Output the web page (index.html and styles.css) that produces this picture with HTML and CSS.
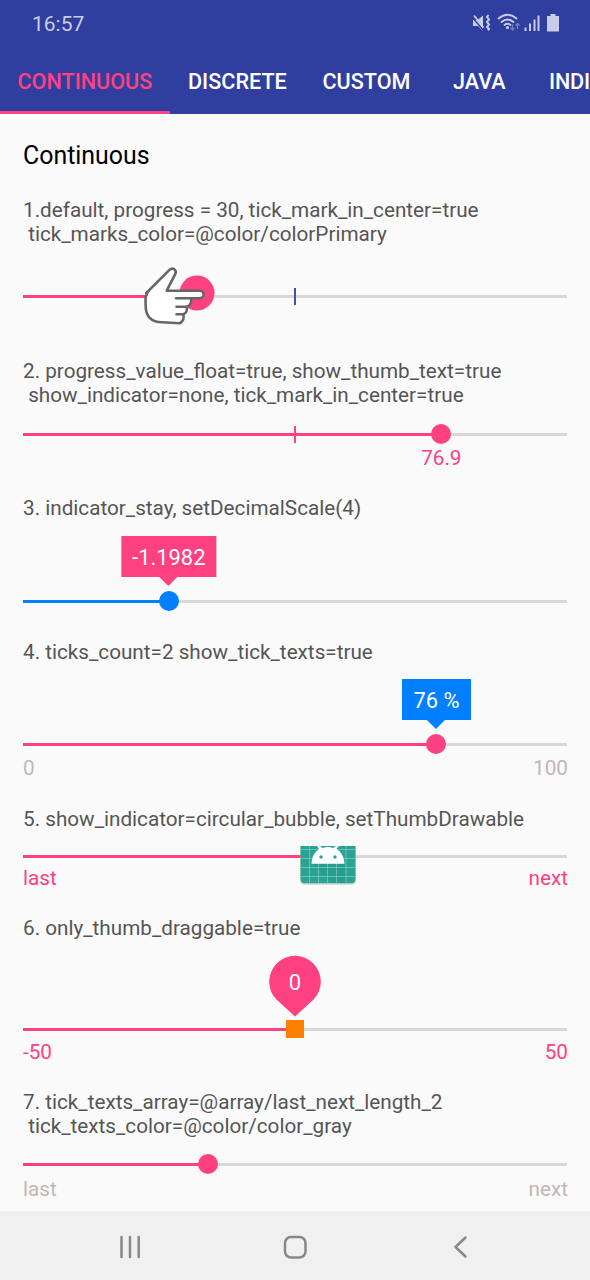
FILE: index.html
```html
<!DOCTYPE html>
<html lang="en">
<head>
<meta charset="utf-8">
<title>Continuous</title>
<link rel="stylesheet" href="styles.css">
</head>
<body>
<header class="app-bar">
  <div class="status">
    <span class="clock">16:57</span>
    <svg class="status-icons" width="90" height="22" viewBox="0 0 90 22" fill="#c9cdea">
      <path d="M3 8h4.500L13 3.500V19l-5-5H3z"/>
      <path d="M2.500 5.500l11 13" stroke="#303f9f" stroke-width="1.400"/>
      <path d="M4 3.500l9.500 12" stroke="#c9cdea" stroke-width="1.800"/>
      <path d="M18.500 3l-1.500 2 2 2.500-2 2.500 2 2.500-2 2.500 2 2-1 1.500" fill="none" stroke="#c9cdea" stroke-width="2"/>
      <g fill="none" stroke="#c9cdea" stroke-width="1.800" stroke-linecap="round">
        <path d="M28.500 6.500q9-7.500 18 0"/><path d="M31.500 10q6-5 12 0"/><path d="M34.500 13q3-2.500 6 0"/>
      </g>
      <circle cx="37.500" cy="15.500" r="1.600"/>
      <g fill="none" stroke="#777fc0" stroke-width="1.300"><path d="M42.500 12.500v5.500m-2-2l2 2 2-2M47.500 17v-5.500m-2 2l2-2 2 2"/></g>
      <path d="M54.500 15.500h2V19h-2zM59 11.500h2V19h-2zM63.500 7.500h2V19h-2zM67.500 3.500h2V19h-2z"/>
      <path d="M80.500 2h5v2H89v15.500H77V4h3.500z"/>
    </svg>
  </div>
  <nav class="tabs">
    <span class="tab tab-continuous">CONTINUOUS</span>
    <span class="tab tab-discrete">DISCRETE</span>
    <span class="tab tab-custom">CUSTOM</span>
    <span class="tab tab-java">JAVA</span>
    <span class="tab tab-last">INDI</span>
  </nav>
</header>
<main class="content">
  <h1 class="title">Continuous</h1>

  <section class="demo demo-1">
    <p class="label">1.default, progress = 30, tick_mark_in_center=true<br>&nbsp;tick_marks_color=@color/colorPrimary</p>
    <div class="track">
      <div class="fill" style="width:30%"></div>
      <i class="mark mark-indigo"></i>
      <i class="thumb thumb-pressed" style="left:174px"></i>
      <svg class="hand" width="64" height="62" viewBox="0 0 64 62">
        <path d="M4 28L27.500 4.500Q29.500 2.500 32 4Q34.500 6 33 9L24.500 25.500H57C63 25.500 63 33 57 33H48.500C50 36.500 48 41 44.500 41.500C45.500 45 44 48.500 41 49C42.500 52 41 56.500 37.500 58L20 57C8 57 3.500 50 3.500 41C3.500 35 2 31 7 25Z" transform="translate(.2 -.8)" fill="#fff" stroke="#666" stroke-width="2.600" stroke-linejoin="round"/>
        <path d="M34 32.200H49M34.500 40.700H45M34.500 48.200H41" fill="none" stroke="#666" stroke-width="2.600" stroke-linecap="round"/>
      </svg>
    </div>
  </section>

  <section class="demo demo-2">
    <p class="label">2. progress_value_float=true, show_thumb_text=true<br>&nbsp;show_indicator=none, tick_mark_in_center=true</p>
    <div class="track">
      <div class="fill" style="width:76.900%"></div>
      <i class="mark"></i>
      <i class="thumb" style="left:76.900%"></i>
      <span class="thumb-text" style="left:76.900%">76.9</span>
    </div>
  </section>

  <section class="demo demo-3">
    <p class="label">3. indicator_stay, setDecimalScale(4)</p>
    <div class="track">
      <div class="fill fill-blue" style="width:26.700%"></div>
      <i class="thumb thumb-blue" style="left:26.800%"></i>
      <span class="bubble" style="left:26.800%">-1.1982</span>
    </div>
  </section>

  <section class="demo demo-4">
    <p class="label">4. ticks_count=2 show_tick_texts=true</p>
    <div class="track">
      <div class="fill" style="width:76%"></div>
      <i class="thumb" style="left:76%"></i>
      <span class="bubble bubble-blue" style="left:76%">76 %</span>
    </div>
    <div class="ends ends-gray"><span>0</span><span>100</span></div>
  </section>

  <section class="demo demo-5">
    <p class="label">5. show_indicator=circular_bubble, setThumbDrawable</p>
    <div class="track">
      <div class="fill" style="width:56%"></div>
      <svg class="robot" width="56" height="40" viewBox="0 0 56 40">
        <path d="M.5 1h55v34.500q0 4-4 4h-47q-4 0-4-4z" fill="#b5c5c2"/>
        <path d="M.5 1h55v33q0 4-4 4h-47q-4 0-4-4z" fill="#2aa394"/>
        <path d="M12 18h32l2 20H32z" fill="#209384" opacity=".35"/>
        <path d="M9.500 1v37M18.500 1v37M27.500 1v37M36.500 1v37M46 1v37M.5 4.500h55M.5 13.500h55M.5 22.500h55M.5 31.500h55" stroke="#7fd0c5" stroke-width=".7"/>
        <path d="M11.500 18.700C12 11 15 6.500 19.500 4L17 1h3.200l2.200 2Q28 .8 33.500 3L35.700 1H39l-2.700 3C41 6.500 44 11 44.500 18.700Z" fill="#fff"/>
        <circle cx="21" cy="12" r="1.700" fill="#26a69a"/><circle cx="35" cy="12" r="1.700" fill="#26a69a"/>
      </svg>
    </div>
    <div class="ends"><span>last</span><span>next</span></div>
  </section>

  <section class="demo demo-6">
    <p class="label">6. only_thumb_draggable=true</p>
    <div class="track">
      <div class="fill" style="width:50%"></div>
      <i class="thumb thumb-square" style="left:50%"></i>
      <svg class="pin" width="52" height="62" viewBox="0 0 52 62"><path d="M26 61.500L7.200 44.300A25.800 25.800 0 1 1 44.800 44.300Z" fill="#ff4081"/></svg>
      <span class="pin-text">0</span>
    </div>
    <div class="ends"><span>-50</span><span>50</span></div>
  </section>

  <section class="demo demo-7">
    <p class="label">7. tick_texts_array=@array/last_next_length_2<br>&nbsp;tick_texts_color=@color/color_gray</p>
    <div class="track">
      <div class="fill" style="width:34%"></div>
      <i class="thumb" style="left:34%"></i>
    </div>
    <div class="ends ends-gray"><span>last</span><span>next</span></div>
  </section>
</main>
<footer class="nav-bar">
  <svg width="24" height="24" viewBox="0 0 24 24"><path d="M3.500 2v20M12 2v20M20.700 2v20"/></svg>
  <svg width="24" height="24" viewBox="0 0 24 24"><rect x="2" y="2" width="20.500" height="20.500" rx="6"/></svg>
  <svg width="24" height="24" viewBox="0 0 24 24"><path d="M17.500 2.500L7.500 12l10 9.500"/></svg>
</footer>
</body>
</html>
```
FILE: styles.css
```css
* { box-sizing: border-box; }
body {
  margin: 0;
  width: 590px;
  height: 1280px;
  display: flex;
  flex-direction: column;
  overflow: hidden;
  background: #fafafa;
  font-family: Roboto, sans-serif;
  font-size: 20.700px;
  line-height: 24px;
  color: #555;
}
.app-bar { height: 114px; flex: none; background: #303f9f; }
.status {
  height: 48px;
  display: flex;
  justify-content: space-between;
  padding: 12px 30px 0 32px;
}
.clock { font-size: 21px; color: #c9cdea; }
.tabs { height: 66px; display: flex; }
.tab {
  flex: none;
  height: 66px;
  padding: 22px 0 0 18px;
  font-size: 21.600px;
  font-weight: 500;
  color: #fff;
  white-space: nowrap;
}
.tab-continuous {
  width: 170px;
  padding-left: 17.500px;
  color: #ff4081;
  border-bottom: 3px solid #ff4081;
}
.tab-discrete { width: 134.500px; }
.tab-custom { width: 130.500px; }
.tab-java { width: 96px; }
.tab-last { width: 59px; letter-spacing: -.2px; }
.content { height: 1097px; flex: none; padding: 0 23px; }
.title {
  margin: 0;
  padding-top: 27px;
  height: 84px;
  font-size: 24.900px;
  line-height: 30px;
  font-weight: 400;
  color: #000;
}
.demo { display: flex; flex-direction: column; }
.label { margin: 0; white-space: nowrap; }
.demo-1 { height: 161px; }
.demo-2 { height: 137px; }
.demo-3 { height: 143.500px; }
.demo-4 { height: 167.500px; }
.demo-5 { height: 109px; }
.demo-6 { height: 174px; }
.demo-1 .track { margin-top: 49px; }
.demo-2 .track { margin-top: 26px; }
.demo-3 .track { margin-top: 80px; }
.demo-4 .track { margin-top: 79.500px; }
.demo-5 .track { margin-top: 24px; }
.demo-6 .track { margin-top: 88px; }
.demo-7 .track { margin-top: 25px; }
.track {
  position: relative;
  flex: none;
  width: 544px;
  height: 3px;
  background: #d8d8d8;
}
.fill { height: 3px; background: #ff4081; }
.fill-blue { background: #007fff; }
.mark {
  position: absolute;
  left: 271px;
  top: -7px;
  width: 2px;
  height: 17px;
  background: #ff4081;
}
.mark-indigo { background: #3f51b5; }
.thumb {
  position: absolute;
  top: 1px;
  width: 20px;
  height: 20px;
  border-radius: 50%;
  background: #ff4081;
  transform: translate(-50%, -50%);
}
.thumb-pressed { top: -2.500px; width: 35px; height: 35px; }
.thumb-blue { background: #007fff; }
.thumb-square { width: 18px; height: 18px; border-radius: 0; background: #ff8000; }
.thumb-text {
  position: absolute;
  top: 13px;
  color: #ff4081;
  transform: translateX(-50%);
}
.hand { position: absolute; left: 118.500px; top: -29px; }
.bubble {
  position: absolute;
  top: -64px;
  height: 41px;
  padding: 0 11px;
  line-height: 44px;
  font-size: 21.900px;
  color: #fff;
  background: #ff4081;
  white-space: nowrap;
  transform: translateX(-50%);
}
.bubble::after {
  content: "";
  position: absolute;
  left: 50%;
  top: 100%;
  margin-left: -9px;
  border: 9px solid transparent;
  border-top-color: #ff4081;
  border-bottom: 0;
}
.bubble-blue { background: #007fff; }
.bubble-blue::after { border-top-color: #007fff; }
.robot { position: absolute; left: 277px; top: -10px; }
.pin { position: absolute; left: 246px; top: -73px; }
.pin-text {
  position: absolute;
  left: 246px;
  top: -57px;
  width: 52px;
  text-align: center;
  color: #fff;
  font-size: 22px;
}
.ends {
  display: flex;
  justify-content: space-between;
  margin-top: 10px;
  margin-right: -1px;
  color: #ff4081;
}
.demo-5 .ends { margin-top: 8px; }
.demo-6 .ends { margin-top: 9px; }
.demo-7 .ends { margin-top: 11px; }
.ends-gray { color: #c5b5b5; }
.nav-bar {
  height: 72px;
  flex: none;
  display: flex;
  justify-content: space-between;
  align-items: center;
  padding: 0 118px;
  background: #f0f0f0;
}
.nav-bar svg { fill: none; stroke: #888; stroke-width: 2.500; stroke-linecap: round; stroke-linejoin: round; }
```
